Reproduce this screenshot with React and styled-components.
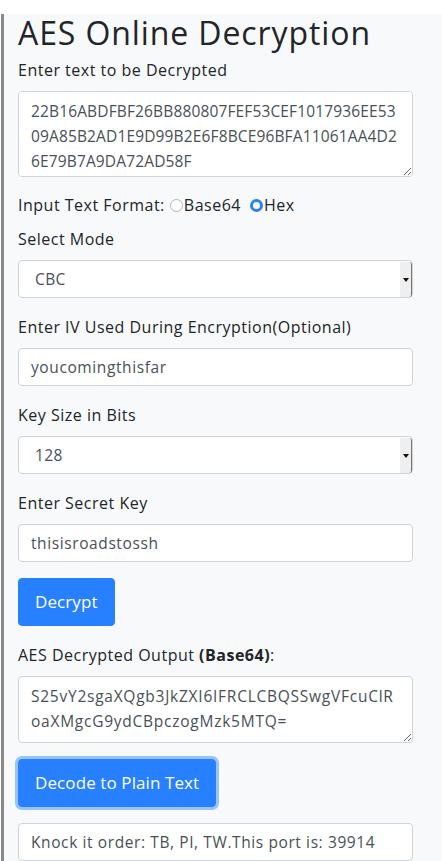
import styled, { createGlobalStyle } from 'styled-components'
import { useState } from 'react'

const GlobalStyle = createGlobalStyle`
  html, body {
    margin: 0;
    padding: 0;
    background: #ffffff;
  }
  body {
    font-family: "Open Sans", "Noto Sans", sans-serif;
    color: #212529;
    font-size: 16px;
    letter-spacing: 0.5px;
    line-height: 1.6;
  }
  * { box-sizing: border-box; }
`

const Page = styled.div`
  padding-top: 14px;
  min-height: 861px;
`

const Panel = styled.div`
  background: #f8f9fa;
  border-left: 3px solid #8a8a8a;
  margin-left: 1px;
  padding: 0 29px 0 14px;
  min-height: 847px;
`

const Title = styled.h1`
  margin: 0 0 5px;
  font-size: 32px;
  font-weight: 500;
  letter-spacing: 0.9px;
  line-height: 1.2;
  color: #212529;
`

const Group = styled.div`
  margin-bottom: 16px;
`

const Label = styled.label`
  display: block;
  margin-bottom: 8px;
  line-height: 26px;
  strong { font-weight: 700; }
`

const fieldBase = `
  display: block;
  width: 100%;
  border: 1px solid #ced4da;
  border-radius: 4px;
  background: #ffffff;
  color: #495057;
  font-family: "Open Sans", "Noto Sans", sans-serif;
  font-size: 15.5px;
  padding: 6px 12px;
  outline: none;
`

const Input = styled.input`
  ${fieldBase}
  height: 38px;
  line-height: 24px;
  letter-spacing: 0.6px;
`

const TextArea = styled.textarea`
  ${fieldBase}
  height: ${({ $h }) => $h}px;
  line-height: 25px;
  padding-top: 7px;
  resize: vertical;
  word-break: break-all;
  letter-spacing: ${({ $ls }) => $ls}px;
`

const SelectWrap = styled.div`
  position: relative;
`

const Select = styled.select`
  ${fieldBase}
  height: 38px;
  padding-left: 16px;
  letter-spacing: 0.4px;
  appearance: none;
  -webkit-appearance: none;
`

const ArrowBox = styled.span`
  position: absolute;
  top: 2px;
  bottom: 1px;
  right: 1px;
  width: 12px;
  background: #efefef;
  border-right: 1px solid #767676;
  border-radius: 0 3px 3px 0;
  pointer-events: none;
  &::after {
    content: '';
    position: absolute;
    top: 50%;
    left: 3px;
    margin-top: -2px;
    border-left: 3px solid transparent;
    border-right: 3px solid transparent;
    border-top: 4px solid #111;
  }
`

const RadioRow = styled.div`
  display: flex;
  align-items: center;
  line-height: 24px;
  margin-bottom: 9px;
`

const Radio = styled.input`
  appearance: none;
  -webkit-appearance: none;
  margin: 0 1px 0 5px;
  width: 13px;
  height: 13px;
  border-radius: 50%;
  background: #ffffff;
  border: 1px solid #b5b5b5;
  &:checked {
    border: 3.5px solid #2680ff;
  }
`

const RadioText = styled.span`
  margin-right: ${({ $gap }) => $gap || 0}px;
`

const Button = styled.button`
  display: inline-block;
  background: #2680ff;
  color: #ffffff;
  border: 1px solid #2680ff;
  border-radius: 4px;
  font-family: "Open Sans", "Noto Sans", sans-serif;
  font-size: 17px;
  font-weight: 500;
  letter-spacing: 0.1px;
  line-height: 30px;
  padding: 8px 16px;
  box-shadow: ${({ $focus }) => ($focus ? '0 0 0 3px rgba(38, 128, 255, 0.45)' : 'none')};
  cursor: pointer;
`

const App = () => {
  const [format, setFormat] = useState('hex')

  return (
    <Page>
      <GlobalStyle />
      <Panel>
        <Title>AES Online Decryption</Title>

        <Group>
          <Label>Enter text to be Decrypted</Label>
          <TextArea
            $h={86}
            $ls={0.14}
            readOnly
            value="22B16ABDFBF26BB880807FEF53CEF1017936EE5309A85B2AD1E9D99B2E6F8BCE96BFA11061AA4D26E79B7A9DA72AD58F"
          />
        </Group>

        <RadioRow>
          Input Text Format:
          <Radio type="radio" name="fmt" checked={format === 'base64'} onChange={() => setFormat('base64')} />
          <RadioText $gap={4}>Base64</RadioText>
          <Radio type="radio" name="fmt" checked={format === 'hex'} onChange={() => setFormat('hex')} />
          <RadioText>Hex</RadioText>
        </RadioRow>

        <Group>
          <Label>Select Mode</Label>
          <SelectWrap>
            <Select defaultValue="CBC">
              <option>CBC</option>
              <option>ECB</option>
            </Select>
            <ArrowBox />
          </SelectWrap>
        </Group>

        <Group>
          <Label>Enter IV Used During Encryption(Optional)</Label>
          <Input readOnly value="youcomingthisfar" />
        </Group>

        <Group>
          <Label>Key Size in Bits</Label>
          <SelectWrap>
            <Select defaultValue="128">
              <option>128</option>
              <option>192</option>
              <option>256</option>
            </Select>
            <ArrowBox />
          </SelectWrap>
        </Group>

        <Group>
          <Label>Enter Secret Key</Label>
          <Input readOnly value="thisisroadstossh" />
        </Group>

        <Group>
          <Button>Decrypt</Button>
        </Group>

        <Group>
          <Label>AES Decrypted Output <strong>(Base64)</strong>:</Label>
          <TextArea
            $h={67}
            $ls={0.75}
            readOnly
            value="S25vY2sgaXQgb3JkZXI6IFRCLCBQSSwgVFcuClRoaXMgcG9ydCBpczogMzk5MTQ="
          />
        </Group>

        <Group>
          <Button $focus>Decode to Plain Text</Button>
        </Group>

        <Group>
          <Input readOnly value="Knock it order: TB, PI, TW.This port is: 39914" />
        </Group>
      </Panel>
    </Page>
  )
}

export default App
